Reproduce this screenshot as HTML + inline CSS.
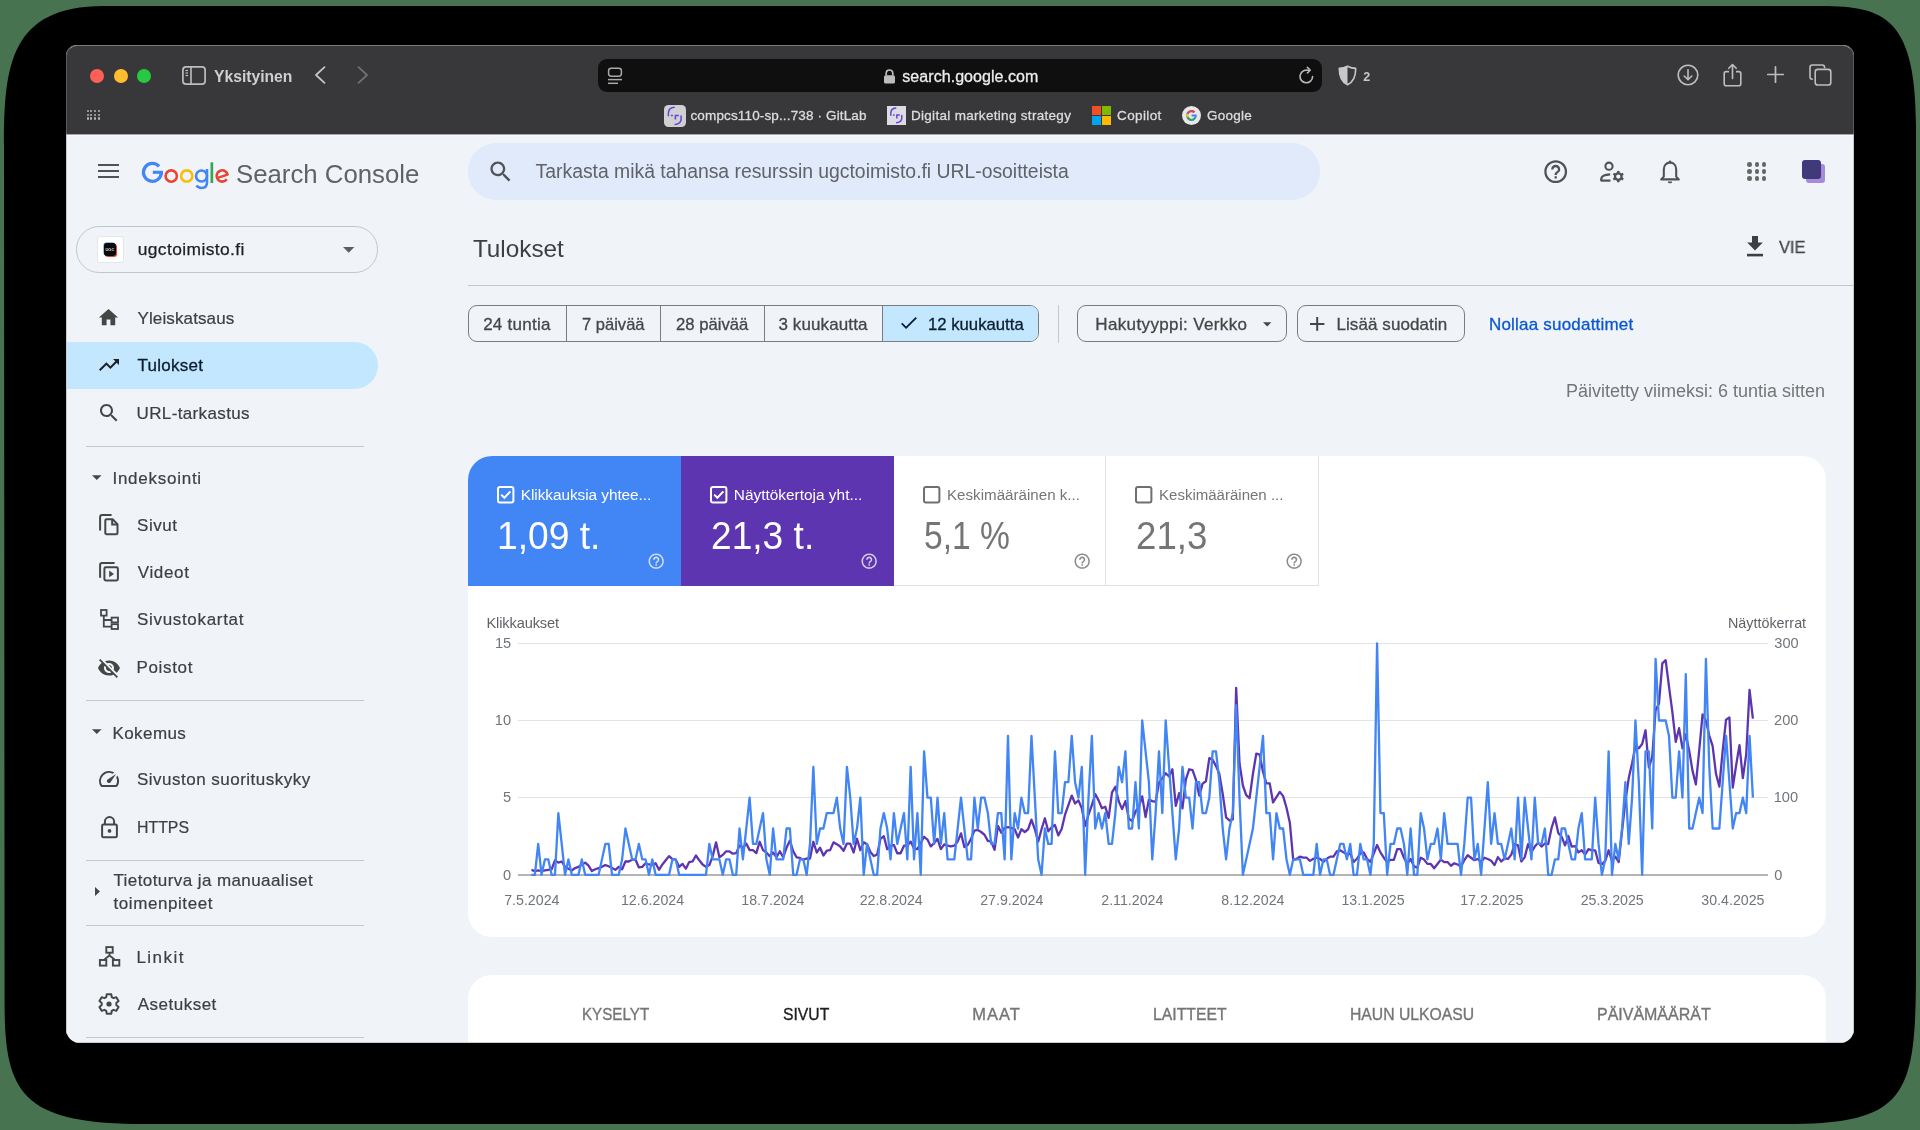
<!DOCTYPE html>
<html><head><meta charset="utf-8">
<style>
*{box-sizing:border-box;margin:0;padding:0}
html,body{width:1920px;height:1130px;overflow:hidden;background:#487350;font-family:"Liberation Sans",sans-serif}
.a{position:absolute}
.t{position:absolute;white-space:nowrap;line-height:1}
.i{position:absolute;overflow:visible}
#win{position:absolute;left:66px;top:45px;width:1788px;height:998px;border-radius:11px 11px 14px 14px;overflow:hidden;background:#f0f4f9}
#pg{position:absolute;left:-66px;top:-45px;width:1920px;height:1130px;will-change:transform}
</style></head><body>
<svg class="a" style="left:0;top:0" width="1920" height="1130"><path d="M4 146 C4 66 10 6 104 6 L1816 6 C1880 6 1916 12 1916 126 L1916 964 C1916 1094 1910 1124 1786 1124 L144.6 1124 C22.6 1124 4.6 1094 4.6 1004 Z" fill="#000"/></svg>
<div id="win"><div id="pg">
<div class="a" style="left:66px;top:45px;width:1788px;height:89px;background:#38383a"></div>
<div class="a" style="left:66px;top:134px;width:1788px;height:1px;background:#a3a5a8"></div>
<div class="a" style="left:66px;top:135px;width:1788px;height:1px;background:#f5f8fc"></div>
<div class="a" style="left:66px;top:45px;width:1788px;height:89px;border-top:1px solid #7a7a7c;border-left:1px solid #58585a;border-right:1px solid #58585a;border-radius:11px 11px 0 0"></div>
<div class="a" style="left:90px;top:68.5px;width:14px;height:14px;border-radius:50%;background:#fe5f57"></div>
<div class="a" style="left:113.5px;top:68.5px;width:14px;height:14px;border-radius:50%;background:#febc2e"></div>
<div class="a" style="left:137px;top:68.5px;width:14px;height:14px;border-radius:50%;background:#28c840"></div>
<svg class="i" style="left:182px;top:66px;width:24px;height:19px;" viewBox="0 0 24 19"><rect x="0.9" y="0.9" width="22.2" height="17.2" rx="3.2" fill="none" stroke="#bdbdbd" stroke-width="1.7"/><line x1="9" y1="1" x2="9" y2="18" stroke="#bdbdbd" stroke-width="1.6"/><line x1="3.5" y1="4.5" x2="6" y2="4.5" stroke="#bdbdbd" stroke-width="1.2"/><line x1="3.5" y1="7" x2="6" y2="7" stroke="#bdbdbd" stroke-width="1.2"/><line x1="3.5" y1="9.5" x2="6" y2="9.5" stroke="#bdbdbd" stroke-width="1.2"/></svg>
<div class="t" style="left:213.56px;top:68.86px;font-size:16px;color:#cfcfcf;transform:scaleX(0.9797);transform-origin:0 0;font-weight:bold;">Yksityinen</div>
<svg class="i" style="left:314px;top:66px;width:12px;height:18px;" viewBox="0 0 12 18"><path d="M10.5 1.2 L2 9 L10.5 16.8" fill="none" stroke="#c4c4c4" stroke-width="1.8" stroke-linecap="round" stroke-linejoin="round"/></svg>
<svg class="i" style="left:357px;top:66px;width:12px;height:18px;" viewBox="0 0 12 18"><path d="M1.5 1.2 L10 9 L1.5 16.8" fill="none" stroke="#707072" stroke-width="1.8" stroke-linecap="round" stroke-linejoin="round"/></svg>
<div class="a" style="left:598px;top:59px;width:724px;height:33px;border-radius:9px;background:#0f0f0f"></div>
<svg class="i" style="left:607px;top:67px;width:16px;height:18px;" viewBox="0 0 16 18"><rect x="1.6" y="1.2" width="12.8" height="8" rx="2.6" fill="none" stroke="#a9a9a9" stroke-width="1.5"/><line x1="1" y1="12.6" x2="15" y2="12.6" stroke="#a9a9a9" stroke-width="1.5"/><line x1="1" y1="16.3" x2="11" y2="16.3" stroke="#a9a9a9" stroke-width="1.5"/></svg>
<svg class="i" style="left:883px;top:69px;width:13px;height:15px;" viewBox="0 0 13 15"><path d="M3.2 6.5 V4.4 C3.2 2.3 4.6 1 6.5 1 C8.4 1 9.8 2.3 9.8 4.4 V6.5" fill="none" stroke="#bdbdbd" stroke-width="1.7"/><rect x="1" y="6.2" width="11" height="8.3" rx="1.6" fill="#bdbdbd"/></svg>
<div class="t" style="left:902.30px;top:68.76px;font-size:16px;color:#ececec;letter-spacing:0.053px;-webkit-text-stroke:0.3px #ececec;">search.google.com</div>
<svg class="i" style="left:1298px;top:66px;width:18px;height:19px;" viewBox="0 0 18 19"><path d="M14.6 10.6 A6.3 6.3 0 1 1 9 4.2 L11.5 4.2" fill="none" stroke="#b9b9b9" stroke-width="1.6" stroke-linecap="round"/><path d="M9.4 1.4 L12.2 4.2 L9.4 7" fill="none" stroke="#b9b9b9" stroke-width="1.6" stroke-linecap="round" stroke-linejoin="round"/></svg>
<svg class="i" style="left:1338px;top:65px;width:19px;height:21px;" viewBox="0 0 19 21"><path d="M9.5 1.2 C6.8 2.6 4 3.3 1.3 3.4 C1.2 11 3.6 16.8 9.5 19.8 C15.4 16.8 17.8 11 17.7 3.4 C15 3.3 12.2 2.6 9.5 1.2 Z" fill="none" stroke="#c8c8c8" stroke-width="1.6" stroke-linejoin="round"/><path d="M9.5 1.2 C6.8 2.6 4 3.3 1.3 3.4 C1.2 11 3.6 16.8 9.5 19.8 Z" fill="#c8c8c8"/></svg>
<div class="t" style="left:1363.36px;top:70.62px;font-size:12.5px;color:#c8c8c8;font-weight:bold;">2</div>
<svg class="i" style="left:1677px;top:64px;width:22px;height:22px;" viewBox="0 0 22 22"><circle cx="11" cy="11" r="9.8" fill="none" stroke="#bdbdbd" stroke-width="1.6"/><path d="M11 5.8 V15.6 M7.2 12 L11 15.8 L14.8 12" fill="none" stroke="#bdbdbd" stroke-width="1.6" stroke-linecap="round" stroke-linejoin="round"/></svg>
<svg class="i" style="left:1723px;top:63px;width:19px;height:24px;" viewBox="0 0 19 24"><path d="M6 8.6 H3.2 C2 8.6 1.2 9.4 1.2 10.6 V20.8 C1.2 22 2 22.8 3.2 22.8 H15.8 C17 22.8 17.8 22 17.8 20.8 V10.6 C17.8 9.4 17 8.6 15.8 8.6 H13" fill="none" stroke="#bdbdbd" stroke-width="1.6"/><path d="M9.5 15.5 V1.8 M5.8 5.3 L9.5 1.5 L13.2 5.3" fill="none" stroke="#bdbdbd" stroke-width="1.6" stroke-linecap="round" stroke-linejoin="round"/></svg>
<svg class="i" style="left:1767px;top:66px;width:17px;height:17px;" viewBox="0 0 17 17"><path d="M8.5 0.8 V16.2 M0.8 8.5 H16.2" fill="none" stroke="#bdbdbd" stroke-width="1.7" stroke-linecap="round"/></svg>
<svg class="i" style="left:1809px;top:64px;width:23px;height:22px;" viewBox="0 0 23 22"><path d="M3.8 15.2 H3.4 C2 15.2 1 14.2 1 12.8 V3.4 C1 2 2 1 3.4 1 H13.2 C14.6 1 15.6 2 15.6 3.4 V4.2" fill="none" stroke="#bdbdbd" stroke-width="1.6"/><rect x="6.2" y="5.4" width="15.6" height="15.6" rx="2.6" fill="none" stroke="#bdbdbd" stroke-width="1.6"/></svg>
<div class="a" style="left:86.5px;top:109.6px;width:2.2px;height:2.2px;background:#b5b5b5;border-radius:1px"></div>
<div class="a" style="left:86.5px;top:113.5px;width:2.2px;height:2.2px;background:#b5b5b5;border-radius:1px"></div>
<div class="a" style="left:86.5px;top:117.4px;width:2.2px;height:2.2px;background:#b5b5b5;border-radius:1px"></div>
<div class="a" style="left:90.2px;top:109.6px;width:2.2px;height:2.2px;background:#b5b5b5;border-radius:1px"></div>
<div class="a" style="left:90.2px;top:113.5px;width:2.2px;height:2.2px;background:#b5b5b5;border-radius:1px"></div>
<div class="a" style="left:90.2px;top:117.4px;width:2.2px;height:2.2px;background:#b5b5b5;border-radius:1px"></div>
<div class="a" style="left:93.9px;top:109.6px;width:2.2px;height:2.2px;background:#b5b5b5;border-radius:1px"></div>
<div class="a" style="left:93.9px;top:113.5px;width:2.2px;height:2.2px;background:#b5b5b5;border-radius:1px"></div>
<div class="a" style="left:93.9px;top:117.4px;width:2.2px;height:2.2px;background:#b5b5b5;border-radius:1px"></div>
<div class="a" style="left:97.6px;top:109.6px;width:2.2px;height:2.2px;background:#b5b5b5;border-radius:1px"></div>
<div class="a" style="left:97.6px;top:113.5px;width:2.2px;height:2.2px;background:#b5b5b5;border-radius:1px"></div>
<div class="a" style="left:97.6px;top:117.4px;width:2.2px;height:2.2px;background:#b5b5b5;border-radius:1px"></div>
<svg class="i" style="left:664px;top:105px;width:22px;height:22px;" viewBox="0 0 22 22"><rect x="0" y="0" width="22" height="22" rx="4.5" fill="#cfd0d2"/><path d="M10.1 2.3 C6.8 2.7 4.4 5 4.4 8.2 V10.8" fill="none" stroke="#6a3fd8" stroke-width="1.5" stroke-linecap="round"/><path d="M6.9 10.5 H8.9" stroke="#6a3fd8" stroke-width="1.5"/><path d="M14.8 10.5 H11.4 V14.6" fill="none" stroke="#6a3fd8" stroke-width="1.5"/><path d="M17.1 11.1 V14 C17.1 17.2 14.6 19.1 11.2 19.4" fill="none" stroke="#6a3fd8" stroke-width="1.5" stroke-linecap="round"/></svg>
<div class="t" style="left:690.46px;top:108.87px;font-size:13.5px;color:#dcdcdc;letter-spacing:0.144px;-webkit-text-stroke:0.3px #dcdcdc;">compcs110-sp...738 · GitLab</div>
<svg class="i" style="left:887px;top:106px;width:19px;height:19px;" viewBox="0 0 22 22"><rect x="0" y="0" width="22" height="22" fill="#dcdce2"/><path d="M10.1 2.3 C6.8 2.7 4.4 5 4.4 8.2 V10.8" fill="none" stroke="#6a3fd8" stroke-width="1.7" stroke-linecap="round"/><path d="M6.9 10.5 H8.9" stroke="#6a3fd8" stroke-width="1.7"/><path d="M14.8 10.5 H11.4 V14.6" fill="none" stroke="#6a3fd8" stroke-width="1.7"/><path d="M17.1 11.1 V14 C17.1 17.2 14.6 19.1 11.2 19.4" fill="none" stroke="#6a3fd8" stroke-width="1.7" stroke-linecap="round"/></svg>
<div class="t" style="left:910.92px;top:108.87px;font-size:13.5px;color:#dcdcdc;letter-spacing:0.309px;-webkit-text-stroke:0.3px #dcdcdc;">Digital marketing strategy</div>
<svg class="i" style="left:1092px;top:106px;width:19px;height:19px;" viewBox="0 0 19 19"><rect x="0" y="0" width="9" height="9" fill="#f25022"/><rect x="10" y="0" width="9" height="9" fill="#7fba00"/><rect x="0" y="10" width="9" height="9" fill="#00a4ef"/><rect x="10" y="10" width="9" height="9" fill="#ffb900"/></svg>
<div class="t" style="left:1117.03px;top:108.87px;font-size:13.5px;color:#dcdcdc;letter-spacing:0.376px;-webkit-text-stroke:0.3px #dcdcdc;">Copilot</div>
<svg class="i" style="left:1182px;top:106px;width:19px;height:19px;" viewBox="0 0 19 19"><circle cx="9.5" cy="9.5" r="9.5" fill="#e8e8e8"/><path d="M14.6 8.6 H9.6 V10.6 H12.5 C12.1 12 11 12.9 9.5 12.9 C7.6 12.9 6.1 11.4 6.1 9.5 C6.1 7.6 7.6 6.1 9.5 6.1 C10.4 6.1 11.1 6.4 11.7 6.9 L13.1 5.5 C12.2 4.6 10.9 4.1 9.5 4.1 C6.5 4.1 4.1 6.5 4.1 9.5 C4.1 12.5 6.5 14.9 9.5 14.9 C12.4 14.9 14.7 12.8 14.7 9.6 Z" fill="#4285f4"/><path d="M5 7 A5.4 5.4 0 0 1 13.1 5.5 L11.7 6.9 A3.4 3.4 0 0 0 6.6 8 Z" fill="#ea4335"/><path d="M4.5 11.5 A5.4 5.4 0 0 1 4.6 7.4 L6.5 8.3 A3.4 3.4 0 0 0 6.4 10.7 Z" fill="#fbbc05"/><path d="M4.6 11.6 L6.5 10.8 A3.4 3.4 0 0 0 11.9 12 L13.3 13.3 A5.4 5.4 0 0 1 4.6 11.6 Z" fill="#34a853"/></svg>
<div class="t" style="left:1207.03px;top:108.87px;font-size:13.5px;color:#dcdcdc;letter-spacing:0.236px;-webkit-text-stroke:0.3px #dcdcdc;">Google</div>
<div class="a" style="left:98px;top:164.3px;width:21.4px;height:2px;background:#505356"></div>
<div class="a" style="left:98px;top:170.3px;width:21.4px;height:2px;background:#505356"></div>
<div class="a" style="left:98px;top:176.3px;width:21.4px;height:2px;background:#505356"></div>
<svg class="a" style="left:0;top:0" width="300" height="220"><path d="M159.05 166.31 A8.95 8.95 0 1 0 161.35 172.30" fill="none" stroke="#4285f4" stroke-width="3.3"/><path d="M162.95 172.30 H152.80" stroke="#4285f4" stroke-width="3.1"/><circle cx="171.25" cy="176" r="5.65" fill="none" stroke="#ea4335" stroke-width="2.55"/><circle cx="186.75" cy="176" r="5.65" fill="none" stroke="#fbbc05" stroke-width="2.55"/><circle cx="201.5" cy="176" r="5.5" fill="none" stroke="#4285f4" stroke-width="2.55"/><path d="M207 169 V182.4 C207 186 204.8 187.9 201.4 187.9 C199.2 187.9 197.5 187.1 196.4 185.6" fill="none" stroke="#4285f4" stroke-width="2.55"/><rect x="210.5" y="162.3" width="2.7" height="20.7" fill="#34a853"/><path d="M226.83 179.24 A5.65 5.65 0 1 1 227.85 175.40" fill="none" stroke="#ea4335" stroke-width="2.55"/><path d="M216.8 178.2 L227.6 174.6" stroke="#ea4335" stroke-width="2.4"/></svg>
<div class="t" style="left:236.14px;top:160.59px;font-size:26px;color:#5f6368;transform:scaleX(0.9914);transform-origin:0 0;">Search Console</div>
<div class="a" style="left:467.5px;top:143.4px;width:852.5px;height:56.2px;border-radius:28px;background:#e0eafb"></div>
<svg class="i" style="left:487.4px;top:157.6px;width:27.4px;height:27.4px;" viewBox="0 0 24 24"><path fill="#505356" d="M15.5 14h-.79l-.28-.27C15.41 12.59 16 11.11 16 9.5 16 5.91 13.09 3 9.5 3S3 5.91 3 9.5 5.91 16 9.5 16c1.61 0 3.09-.59 4.23-1.57l.27.28v.79l5 4.99L20.49 19l-4.99-5zm-6 0C7.01 14 5 11.99 5 9.5S7.01 5 9.5 5 14 7.01 14 9.5 11.99 14 9.5 14z"/></svg>
<div class="t" style="left:535.61px;top:161.98px;font-size:19.4px;color:#5f6368;letter-spacing:-0.023px;">Tarkasta mikä tahansa resurssin ugctoimisto.fi URL-osoitteista</div>
<svg class="i" style="left:1542.3px;top:157.6px;width:27.4px;height:27.4px;" viewBox="0 0 24 24"><path fill="#505356" d="M11 18h2v-2h-2v2zm1-16C6.48 2 2 6.48 2 12s4.48 10 10 10 10-4.48 10-10S17.52 2 12 2zm0 18c-4.41 0-8-3.59-8-8s3.59-8 8-8 8 3.59 8 8-3.59 8-8 8zm0-14c-2.21 0-4 1.79-4 4h2c0-1.1.9-2 2-2s2 .9 2 2c0 2-3 1.75-3 5h2c0-2.25 3-2.5 3-5 0-2.21-1.79-4-4-4z"/></svg>
<svg class="i" style="left:1600px;top:160.5px;width:25px;height:22px;" viewBox="0 0 25 22"><circle cx="9" cy="5.2" r="3.6" fill="none" stroke="#505356" stroke-width="2.1"/><path d="M1.3 20.3 V17.8 C1.3 15.4 5 13.6 10.2 13.3" fill="none" stroke="#505356" stroke-width="2.3"/><line x1="1.3" y1="19.6" x2="10.5" y2="19.6" stroke="#505356" stroke-width="2.2"/><g transform="translate(18.3 15.6)"><circle r="3.3" fill="none" stroke="#505356" stroke-width="2.3"/><rect x="-1.2" y="-5.7" width="2.4" height="2.6" fill="#505356" transform="rotate(0)"/><rect x="-1.2" y="-5.7" width="2.4" height="2.6" fill="#505356" transform="rotate(60)"/><rect x="-1.2" y="-5.7" width="2.4" height="2.6" fill="#505356" transform="rotate(120)"/><rect x="-1.2" y="-5.7" width="2.4" height="2.6" fill="#505356" transform="rotate(180)"/><rect x="-1.2" y="-5.7" width="2.4" height="2.6" fill="#505356" transform="rotate(240)"/><rect x="-1.2" y="-5.7" width="2.4" height="2.6" fill="#505356" transform="rotate(300)"/></g></svg>
<svg class="i" style="left:1659.5px;top:159.5px;width:20px;height:24px;" viewBox="0 0 20 24"><path d="M10 2.6 C6.1 2.6 3.8 5.6 3.8 9.4 V16.6 L1.2 19.4 H18.8 L16.2 16.6 V9.4 C16.2 5.6 13.9 2.6 10 2.6 Z" fill="none" stroke="#505356" stroke-width="2.1" stroke-linejoin="round"/><circle cx="10" cy="1.8" r="1.3" fill="#505356"/><path d="M7.8 21.4 H12.2 C12.2 22.6 11.2 23.3 10 23.3 C8.8 23.3 7.8 22.6 7.8 21.4Z" fill="#505356"/></svg>
<div class="a" style="left:1747.4px;top:162.0px;width:4.6px;height:4.6px;border-radius:50%;background:#666"></div>
<div class="a" style="left:1747.4px;top:169.1px;width:4.6px;height:4.6px;border-radius:50%;background:#666"></div>
<div class="a" style="left:1747.4px;top:176.3px;width:4.6px;height:4.6px;border-radius:50%;background:#666"></div>
<div class="a" style="left:1754.5px;top:162.0px;width:4.6px;height:4.6px;border-radius:50%;background:#666"></div>
<div class="a" style="left:1754.5px;top:169.1px;width:4.6px;height:4.6px;border-radius:50%;background:#666"></div>
<div class="a" style="left:1754.5px;top:176.3px;width:4.6px;height:4.6px;border-radius:50%;background:#666"></div>
<div class="a" style="left:1761.6px;top:162.0px;width:4.6px;height:4.6px;border-radius:50%;background:#666"></div>
<div class="a" style="left:1761.6px;top:169.1px;width:4.6px;height:4.6px;border-radius:50%;background:#666"></div>
<div class="a" style="left:1761.6px;top:176.3px;width:4.6px;height:4.6px;border-radius:50%;background:#666"></div>
<div class="a" style="left:1806px;top:163.8px;width:19.2px;height:19px;border-radius:3px;background:#a68bdc"></div>
<div class="a" style="left:1802px;top:159.8px;width:19px;height:19.2px;border-radius:3px;background:#403a7a"></div>
<div class="a" style="left:76px;top:226.2px;width:302px;height:46.4px;border-radius:23.2px;border:1px solid #c2c4c6"></div>
<div class="a" style="left:96.6px;top:235.6px;width:27px;height:27.6px;border-radius:3px;background:#fff;border:1px solid #e6e6e6"></div>
<div class="a" style="left:104.2px;top:243px;width:11.6px;height:13px;border-radius:3px;background:#0a0a0a;box-shadow:1px 1px 0 #e8432a, -0.5px -0.5px 0 #3a7bd5"></div>
<div class="t" style="left:105.4px;top:247.6px;font-size:4px;color:#ddd;font-weight:bold">UGC</div>
<div class="t" style="left:137.67px;top:240.77px;font-size:17.4px;color:#1f1f1f;letter-spacing:0.410px;-webkit-text-stroke:0.25px #1f1f1f;">ugctoimisto.fi</div>
<svg class="i" style="left:343px;top:247px;width:11.4px;height:5.8px;" viewBox="0 0 11.4 5.8"><path d="M0 0 H11.4 L5.7 5.8 Z" fill="#5b5e61"/></svg>
<div class="t" style="left:472.91px;top:236.63px;font-size:24.3px;color:#3c4043;letter-spacing:0.004px;">Tulokset</div>
<svg class="i" style="left:1747.3px;top:236.2px;width:16px;height:20.6px;" viewBox="0 0 16 20.6"><path d="M5 0 H11 V6.6 H15.8 L8 14.6 L0.2 6.6 H5 Z" fill="#3c4043"/><rect x="0" y="17.8" width="16" height="2.6" fill="#3c4043"/></svg>
<div class="t" style="left:1778.92px;top:239.01px;font-size:17px;color:#444746;transform:scaleX(0.9697);transform-origin:0 0;-webkit-text-stroke:0.3px #444746;">VIE</div>
<div class="a" style="left:468px;top:285px;width:1386px;height:1.2px;background:#c4c7ca"></div>
<div class="a" style="left:66px;top:341.8px;width:312px;height:47px;border-radius:0 23.5px 23.5px 0;background:#c2e7ff"></div>
<svg class="i" style="left:97.3px;top:306.4px;width:23px;height:23px;" viewBox="0 0 24 24"><path fill="#444746" d="M10 20v-6h4v6h5v-8h3L12 3 2 12h3v8z"/></svg>
<div class="t" style="left:137.46px;top:310.31px;font-size:17px;color:#3c4043;letter-spacing:0.125px;-webkit-text-stroke:0.2px #3c4043;">Yleiskatsaus</div>
<svg class="i" style="left:96.6px;top:353px;width:24px;height:24px;" viewBox="0 0 24 24"><path fill="#1f1f1f" d="M16 6l2.29 2.29-4.88 4.88-4-4L2 16.59 3.41 18l6-6 4 4 6.3-6.29L22 12V6z"/></svg>
<div class="t" style="left:137.46px;top:357.01px;font-size:17px;color:#0b1d2e;letter-spacing:0.264px;-webkit-text-stroke:0.3px #0b1d2e;">Tulokset</div>
<svg class="i" style="left:96.5px;top:401px;width:24px;height:24px;" viewBox="0 0 24 24"><path fill="#444746" d="M15.5 14h-.79l-.28-.27C15.41 12.59 16 11.11 16 9.5 16 5.91 13.09 3 9.5 3S3 5.91 3 9.5 5.91 16 9.5 16c1.61 0 3.09-.59 4.23-1.57l.27.28v.79l5 4.99L20.49 19l-4.99-5zm-6 0C7.01 14 5 11.99 5 9.5S7.01 5 9.5 5 14 7.01 14 9.5 11.99 14 9.5 14z"/></svg>
<div class="t" style="left:136.53px;top:404.51px;font-size:17px;color:#3c4043;letter-spacing:0.370px;-webkit-text-stroke:0.2px #3c4043;">URL-tarkastus</div>
<div class="a" style="left:85.5px;top:445.5px;width:278.5px;height:1.2px;background:#c6c8cb"></div>
<div class="a" style="left:85.5px;top:700px;width:278.5px;height:1.2px;background:#c6c8cb"></div>
<div class="a" style="left:85.5px;top:860px;width:278.5px;height:1.2px;background:#c6c8cb"></div>
<div class="a" style="left:85.5px;top:924.5px;width:278.5px;height:1.2px;background:#c6c8cb"></div>
<div class="a" style="left:85.5px;top:1037px;width:278.5px;height:1.2px;background:#c6c8cb"></div>
<svg class="i" style="left:92.2px;top:475.3px;width:9.6px;height:5.4px;" viewBox="0 0 10 5"><path d="M0 0 H10 L5 5 Z" fill="#444746"/></svg>
<div class="t" style="left:112.47px;top:470.01px;font-size:17px;color:#3c4043;letter-spacing:0.738px;-webkit-text-stroke:0.2px #3c4043;">Indeksointi</div>
<svg class="i" style="left:92.2px;top:729.3px;width:9.6px;height:5.4px;" viewBox="0 0 10 5"><path d="M0 0 H10 L5 5 Z" fill="#444746"/></svg>
<div class="t" style="left:112.44px;top:724.91px;font-size:17px;color:#3c4043;letter-spacing:0.427px;-webkit-text-stroke:0.2px #3c4043;">Kokemus</div>
<svg class="i" style="left:95.2px;top:887.3px;width:5px;height:9px;" viewBox="0 0 5 9"><path d="M0 0 V9 L5 4.5 Z" fill="#444746"/></svg>
<div class="t" style="left:113.46px;top:871.91px;font-size:17px;color:#3c4043;letter-spacing:0.414px;-webkit-text-stroke:0.2px #3c4043;">Tietoturva ja manuaaliset</div>
<div class="t" style="left:113.55px;top:895.21px;font-size:17px;color:#3c4043;letter-spacing:0.570px;-webkit-text-stroke:0.2px #3c4043;">toimenpiteet</div>
<svg class="i" style="left:98.8px;top:514.2px;width:19.6px;height:21.4px;" viewBox="0 0 19.6 21.4"><path d="M1.1 16.5 V3.2 C1.1 2 2 1.1 3.2 1.1 H12.6" fill="none" stroke="#444746" stroke-width="2"/><path d="M6.3 6.6 C6.3 5.8 6.9 5.2 7.7 5.2 H13.6 L18.5 10.1 V18.9 C18.5 19.7 17.9 20.3 17.1 20.3 H7.7 C6.9 20.3 6.3 19.7 6.3 18.9 Z" fill="none" stroke="#444746" stroke-width="2" stroke-linejoin="round"/><path d="M13.2 5.4 V10.5 H18.3" fill="none" stroke="#444746" stroke-width="2"/></svg>
<div class="t" style="left:137.04px;top:516.91px;font-size:17px;color:#3c4043;letter-spacing:0.527px;-webkit-text-stroke:0.2px #3c4043;">Sivut</div>
<svg class="i" style="left:98.8px;top:562.3px;width:20px;height:19.6px;" viewBox="0 0 20 19.6"><path d="M1.1 15.8 V3.1 C1.1 2 2 1.1 3.1 1.1 H15.6" fill="none" stroke="#444746" stroke-width="2"/><rect x="5.4" y="5.3" width="13.5" height="13.2" rx="1.4" fill="none" stroke="#444746" stroke-width="2"/><path d="M10.2 8.5 V15.3 L15 11.9 Z" fill="#444746"/></svg>
<div class="t" style="left:137.72px;top:564.21px;font-size:17px;color:#3c4043;letter-spacing:0.663px;-webkit-text-stroke:0.2px #3c4043;">Videot</div>
<svg class="i" style="left:99.5px;top:609px;width:19px;height:21px;" viewBox="0 0 19 21"><rect x="1" y="1" width="5.6" height="5.6" fill="none" stroke="#444746" stroke-width="1.8"/><rect x="11.6" y="8.6" width="6.4" height="4.8" fill="none" stroke="#444746" stroke-width="1.8"/><rect x="11.6" y="15.2" width="6.4" height="4.8" fill="none" stroke="#444746" stroke-width="1.8"/><path d="M3.8 6.6 V17.6 H11.6 M3.8 11 H11.6" fill="none" stroke="#444746" stroke-width="1.8"/></svg>
<div class="t" style="left:137.04px;top:611.21px;font-size:17px;color:#3c4043;letter-spacing:0.674px;-webkit-text-stroke:0.2px #3c4043;">Sivustokartat</div>
<svg class="i" style="left:97px;top:655.5px;width:24px;height:24px;" viewBox="0 0 24 24"><path fill="#444746" d="M12 7c2.76 0 5 2.24 5 5 0 .65-.13 1.26-.36 1.83l2.92 2.92c1.51-1.26 2.7-2.89 3.43-4.75-1.73-4.39-6-7.5-11-7.5-1.4 0-2.74.25-3.98.7l2.16 2.16C10.74 7.13 11.35 7 12 7zM2 4.27l2.28 2.28.46.46C3.08 8.3 1.78 10.02 1 12c1.73 4.39 6 7.5 11 7.5 1.55 0 3.03-.3 4.38-.84l.42.42L19.73 22 21 20.73 3.27 3 2 4.27zM7.53 9.8l1.55 1.55c-.05.21-.08.43-.08.65 0 1.66 1.34 3 3 3 .22 0 .44-.03.65-.08l1.55 1.55c-.67.33-1.41.53-2.2.53-2.76 0-5-2.24-5-5 0-.79.2-1.53.53-2.2zm4.31-.78l3.15 3.15.02-.16c0-1.66-1.34-3-3-3l-.17.01z"/></svg>
<div class="t" style="left:136.44px;top:659.21px;font-size:17px;color:#3c4043;letter-spacing:0.668px;-webkit-text-stroke:0.2px #3c4043;">Poistot</div>
<svg class="i" style="left:97px;top:767px;width:24px;height:24px;" viewBox="0 0 24 24"><path fill="#444746" d="M20.38 8.57l-1.23 1.85a8 8 0 0 1-.22 7.58H5.07A8 8 0 0 1 15.58 6.85l1.85-1.23A10 10 0 0 0 3.35 19a2 2 0 0 0 1.72 1h13.85a2 2 0 0 0 1.74-1 10 10 0 0 0-.27-10.44zm-9.79 6.84a2 2 0 0 0 2.83 0l5.66-8.49-8.49 5.66a2 2 0 0 0 0 2.83z"/></svg>
<div class="t" style="left:137.04px;top:771.41px;font-size:17px;color:#3c4043;letter-spacing:0.486px;-webkit-text-stroke:0.2px #3c4043;">Sivuston suorituskyky</div>
<svg class="i" style="left:100.5px;top:815.5px;width:17px;height:22.4px;" viewBox="0 0 17 22.4"><path d="M3.9 8.5 V5.6 C3.9 3 6 1.1 8.5 1.1 C11 1.1 13.1 3 13.1 5.6 V8.5" fill="none" stroke="#444746" stroke-width="2"/><rect x="1.1" y="8.5" width="14.8" height="12.8" rx="1.4" fill="none" stroke="#444746" stroke-width="2"/><circle cx="8.5" cy="14.9" r="1.9" fill="#444746"/></svg>
<div class="t" style="left:136.53px;top:818.51px;font-size:17px;color:#3c4043;transform:scaleX(0.9337);transform-origin:0 0;-webkit-text-stroke:0.2px #3c4043;">HTTPS</div>
<svg class="i" style="left:97.5px;top:945px;width:22px;height:22px;" viewBox="0 0 22 22"><rect x="8.3" y="2.1" width="6.4" height="5.6" fill="none" stroke="#444746" stroke-width="1.9"/><rect x="1.9" y="15" width="6.4" height="5.6" fill="none" stroke="#444746" stroke-width="1.9"/><rect x="14.9" y="15" width="6.4" height="5.6" fill="none" stroke="#444746" stroke-width="1.9"/><path d="M11.5 7.7 V10.6 L6.6 14.2 M11.5 10.6 L16.4 14.2" fill="none" stroke="#444746" stroke-width="1.9" stroke-linejoin="round"/></svg>
<div class="t" style="left:136.44px;top:948.91px;font-size:17px;color:#3c4043;letter-spacing:1.467px;-webkit-text-stroke:0.2px #3c4043;">Linkit</div>
<svg class="i" style="left:97.7px;top:992.5px;width:22px;height:22px;" viewBox="0 0 22 22"><polygon points="8.23,4.14 8.75,1.26 13.25,1.26 13.77,4.14 15.56,5.17 18.31,4.18 20.56,8.08 18.33,9.97 18.33,12.03 20.56,13.92 18.31,17.82 15.56,16.83 13.77,17.86 13.25,20.74 8.75,20.74 8.23,17.86 6.44,16.83 3.69,17.82 1.44,13.92 3.67,12.03 3.67,9.97 1.44,8.08 3.69,4.18 6.44,5.17" fill="none" stroke="#444746" stroke-width="2" stroke-linejoin="round"/><circle cx="11" cy="11" r="2.6" fill="#444746"/></svg>
<div class="t" style="left:137.80px;top:996.01px;font-size:17px;color:#3c4043;letter-spacing:0.482px;-webkit-text-stroke:0.2px #3c4043;">Asetukset</div>
<div class="a" style="left:468px;top:305.2px;width:571px;height:37.3px;border-radius:9px;border:1px solid #7a7c7e;overflow:hidden"><div class="a" style="left:414px;top:0;width:157px;height:37px;background:#c2e7ff"></div></div>
<div class="a" style="left:566.4px;top:305.2px;width:1px;height:37.3px;background:#7a7c7e"></div>
<div class="a" style="left:660.2px;top:305.2px;width:1px;height:37.3px;background:#7a7c7e"></div>
<div class="a" style="left:763.6px;top:305.2px;width:1px;height:37.3px;background:#7a7c7e"></div>
<div class="a" style="left:882.4px;top:305.2px;width:1px;height:37.3px;background:#7a7c7e"></div>
<div class="t" style="left:483.15px;top:315.91px;font-size:17px;color:#444746;letter-spacing:0.257px;-webkit-text-stroke:0.3px #444746;">24 tuntia</div>
<div class="t" style="left:581.87px;top:315.91px;font-size:17px;color:#444746;transform:scaleX(0.9730);transform-origin:0 0;-webkit-text-stroke:0.3px #444746;">7 päivää</div>
<div class="t" style="left:675.67px;top:315.91px;font-size:17px;color:#444746;transform:scaleX(0.9815);transform-origin:0 0;-webkit-text-stroke:0.3px #444746;">28 päivää</div>
<div class="t" style="left:778.40px;top:315.91px;font-size:17px;color:#444746;letter-spacing:0.120px;-webkit-text-stroke:0.3px #444746;">3 kuukautta</div>
<svg class="i" style="left:897.6px;top:311.8px;width:21.6px;height:21.6px;" viewBox="0 0 24 24"><path fill="#0b1d2e" d="M9 16.17L4.83 12l-1.42 1.41L9 19 21 7l-1.41-1.41z"/></svg>
<div class="t" style="left:927.65px;top:315.91px;font-size:17px;color:#0b1d2e;transform:scaleX(0.9828);transform-origin:0 0;-webkit-text-stroke:0.3px #0b1d2e;">12 kuukautta</div>
<div class="a" style="left:1058px;top:305px;width:1px;height:37.7px;background:#c6c8cb"></div>
<div class="a" style="left:1077px;top:305.2px;width:210px;height:37.2px;border-radius:9px;border:1px solid #7a7c7e"></div>
<div class="t" style="left:1095.24px;top:316.21px;font-size:17px;color:#444746;letter-spacing:0.372px;-webkit-text-stroke:0.3px #444746;">Hakutyyppi: Verkko</div>
<svg class="i" style="left:1263px;top:321.8px;width:8.4px;height:4.8px;" viewBox="0 0 10 5"><path d="M0 0 H10 L5 5 Z" fill="#444746"/></svg>
<div class="a" style="left:1297.4px;top:305.2px;width:168px;height:37.2px;border-radius:9px;border:1px solid #7a7c7e"></div>
<svg class="i" style="left:1309.7px;top:317.2px;width:14.4px;height:13.8px;" viewBox="0 0 14.4 13.8"><path d="M7.2 0 V13.8 M0 6.9 H14.4" stroke="#444746" stroke-width="2"/></svg>
<div class="t" style="left:1336.44px;top:316.21px;font-size:17px;color:#444746;letter-spacing:0.087px;-webkit-text-stroke:0.3px #444746;">Lisää suodatin</div>
<div class="t" style="left:1488.94px;top:316.21px;font-size:17px;color:#0b57d0;letter-spacing:0.205px;-webkit-text-stroke:0.3px #0b57d0;">Nollaa suodattimet</div>
<div class="t" style="left:1565.96px;top:381.66px;font-size:18px;color:#757575;letter-spacing:0.000px;">Päivitetty viimeksi: 6 tuntia sitten</div>
<div class="a" style="left:468px;top:456px;width:1357.6px;height:481px;border-radius:24px;background:#fff;overflow:hidden"><div class="a" style="left:0;top:0;width:213.2px;height:129.8px;background:#4285f4"></div><div class="a" style="left:213.2px;top:0;width:213px;height:129.8px;background:#5e35b1"></div><div class="a" style="left:637.2px;top:0;width:1px;height:129.8px;background:#dfe1e5"></div><div class="a" style="left:850px;top:0;width:1px;height:129.8px;background:#dfe1e5"></div><div class="a" style="left:426px;top:129.2px;width:425px;height:1px;background:#dfe1e5"></div></div>
<svg class="i" style="left:496.6px;top:485.6px;width:17.4px;height:17.4px;" viewBox="0 0 17.4 17.4"><rect x="1" y="1" width="15.4" height="15.4" rx="2" fill="none" stroke="#fff" stroke-width="2"/><path d="M4.2 8.6 L7.4 11.8 L13.4 5.4" fill="none" stroke="#fff" stroke-width="2"/></svg>
<div class="t" style="left:520.77px;top:486.56px;font-size:15.4px;color:#fff;letter-spacing:-0.063px;">Klikkauksia yhtee...</div>
<div class="t" style="left:496.61px;top:516.26px;font-size:39.5px;color:#fff;transform:scaleX(0.9410);transform-origin:0 0;">1,09 t.</div>
<svg class="i" style="left:646.8px;top:552.3px;width:18.4px;height:18.4px;" viewBox="0 0 24 24"><path fill="rgba(255,255,255,0.75)" d="M11 18h2v-2h-2v2zm1-16C6.48 2 2 6.48 2 12s4.48 10 10 10 10-4.48 10-10S17.52 2 12 2zm0 18c-4.41 0-8-3.59-8-8s3.59-8 8-8 8 3.59 8 8-3.59 8-8 8zm0-14c-2.21 0-4 1.79-4 4h2c0-1.1.9-2 2-2s2 .9 2 2c0 2-3 1.75-3 5h2c0-2.25 3-2.5 3-5 0-2.21-1.79-4-4-4z"/></svg>
<svg class="i" style="left:709.6px;top:485.6px;width:17.4px;height:17.4px;" viewBox="0 0 17.4 17.4"><rect x="1" y="1" width="15.4" height="15.4" rx="2" fill="none" stroke="#fff" stroke-width="2"/><path d="M4.2 8.6 L7.4 11.8 L13.4 5.4" fill="none" stroke="#fff" stroke-width="2"/></svg>
<div class="t" style="left:733.77px;top:486.56px;font-size:15.4px;color:#fff;letter-spacing:0.010px;">Näyttökertoja yht...</div>
<div class="t" style="left:710.54px;top:516.26px;font-size:39.5px;color:#fff;transform:scaleX(0.9398);transform-origin:0 0;">21,3 t.</div>
<svg class="i" style="left:859.8px;top:552.3px;width:18.4px;height:18.4px;" viewBox="0 0 24 24"><path fill="rgba(255,255,255,0.75)" d="M11 18h2v-2h-2v2zm1-16C6.48 2 2 6.48 2 12s4.48 10 10 10 10-4.48 10-10S17.52 2 12 2zm0 18c-4.41 0-8-3.59-8-8s3.59-8 8-8 8 3.59 8 8-3.59 8-8 8zm0-14c-2.21 0-4 1.79-4 4h2c0-1.1.9-2 2-2s2 .9 2 2c0 2-3 1.75-3 5h2c0-2.25 3-2.5 3-5 0-2.21-1.79-4-4-4z"/></svg>
<svg class="i" style="left:922.6px;top:485.6px;width:17.4px;height:17.4px;" viewBox="0 0 17.4 17.4"><rect x="1" y="1" width="15.4" height="15.4" rx="2" fill="none" stroke="#6f6f6f" stroke-width="2"/></svg>
<div class="t" style="left:946.79px;top:486.56px;font-size:15.4px;color:#757575;transform:scaleX(0.9836);transform-origin:0 0;">Keskimääräinen k...</div>
<div class="t" style="left:924.06px;top:516.26px;font-size:39.5px;color:#757575;transform:scaleX(0.8507);transform-origin:0 0;">5,1 %</div>
<svg class="i" style="left:1072.8px;top:552.3px;width:18.4px;height:18.4px;" viewBox="0 0 24 24"><path fill="#8a8a8a" d="M11 18h2v-2h-2v2zm1-16C6.48 2 2 6.48 2 12s4.48 10 10 10 10-4.48 10-10S17.52 2 12 2zm0 18c-4.41 0-8-3.59-8-8s3.59-8 8-8 8 3.59 8 8-3.59 8-8 8zm0-14c-2.21 0-4 1.79-4 4h2c0-1.1.9-2 2-2s2 .9 2 2c0 2-3 1.75-3 5h2c0-2.25 3-2.5 3-5 0-2.21-1.79-4-4-4z"/></svg>
<svg class="i" style="left:1135.1px;top:485.6px;width:17.4px;height:17.4px;" viewBox="0 0 17.4 17.4"><rect x="1" y="1" width="15.4" height="15.4" rx="2" fill="none" stroke="#6f6f6f" stroke-width="2"/></svg>
<div class="t" style="left:1159.30px;top:486.56px;font-size:15.4px;color:#757575;transform:scaleX(0.9762);transform-origin:0 0;">Keskimääräinen ...</div>
<div class="t" style="left:1136.07px;top:516.26px;font-size:39.5px;color:#757575;transform:scaleX(0.9280);transform-origin:0 0;">21,3</div>
<svg class="i" style="left:1285.3px;top:552.3px;width:18.4px;height:18.4px;" viewBox="0 0 24 24"><path fill="#8a8a8a" d="M11 18h2v-2h-2v2zm1-16C6.48 2 2 6.48 2 12s4.48 10 10 10 10-4.48 10-10S17.52 2 12 2zm0 18c-4.41 0-8-3.59-8-8s3.59-8 8-8 8 3.59 8 8-3.59 8-8 8zm0-14c-2.21 0-4 1.79-4 4h2c0-1.1.9-2 2-2s2 .9 2 2c0 2-3 1.75-3 5h2c0-2.25 3-2.5 3-5 0-2.21-1.79-4-4-4z"/></svg>
<div class="t" style="left:486.43px;top:616.24px;font-size:14.6px;color:#5f6368;letter-spacing:-0.116px;">Klikkaukset</div>
<div class="t" style="left:1727.95px;top:616.24px;font-size:14.6px;color:#5f6368;transform:scaleX(0.9827);transform-origin:0 0;">Näyttökerrat</div>
<div class="t" style="left:494.88px;top:636.24px;font-size:14.6px;color:#70757a;">15</div>
<div class="t" style="left:1774.29px;top:636.24px;font-size:14.6px;color:#70757a;">300</div>
<div class="t" style="left:494.80px;top:713.24px;font-size:14.6px;color:#70757a;">10</div>
<div class="t" style="left:1774.07px;top:713.24px;font-size:14.6px;color:#70757a;">200</div>
<div class="t" style="left:502.98px;top:790.24px;font-size:14.6px;color:#70757a;">5</div>
<div class="t" style="left:1773.70px;top:790.24px;font-size:14.6px;color:#70757a;">100</div>
<div class="t" style="left:502.91px;top:867.74px;font-size:14.6px;color:#70757a;">0</div>
<div class="t" style="left:1774.22px;top:867.74px;font-size:14.6px;color:#70757a;">0</div>
<div class="a" style="left:518px;top:642.7px;width:1249.5px;height:1.2px;background:#e3e3e3"></div>
<div class="a" style="left:518px;top:719.7px;width:1249.5px;height:1.2px;background:#e3e3e3"></div>
<div class="a" style="left:518px;top:796.7px;width:1249.5px;height:1.2px;background:#e3e3e3"></div>
<div class="a" style="left:518px;top:873.8px;width:1249.5px;height:2px;background:#b4b4b4"></div>
<div class="t" style="left:504.20px;top:892.98px;font-size:14.2px;color:#70757a;">7.5.2024</div>
<div class="t" style="left:620.95px;top:892.98px;font-size:14.2px;color:#70757a;">12.6.2024</div>
<div class="t" style="left:741.35px;top:892.98px;font-size:14.2px;color:#70757a;">18.7.2024</div>
<div class="t" style="left:859.63px;top:892.98px;font-size:14.2px;color:#70757a;">22.8.2024</div>
<div class="t" style="left:980.23px;top:892.98px;font-size:14.2px;color:#70757a;">27.9.2024</div>
<div class="t" style="left:1101.26px;top:892.98px;font-size:14.2px;color:#70757a;">2.11.2024</div>
<div class="t" style="left:1221.30px;top:892.98px;font-size:14.2px;color:#70757a;">8.12.2024</div>
<div class="t" style="left:1341.46px;top:892.98px;font-size:14.2px;color:#70757a;">13.1.2025</div>
<div class="t" style="left:1460.16px;top:892.98px;font-size:14.2px;color:#70757a;">17.2.2025</div>
<div class="t" style="left:1580.63px;top:892.98px;font-size:14.2px;color:#70757a;">25.3.2025</div>
<div class="t" style="left:1701.34px;top:892.98px;font-size:14.2px;color:#70757a;">30.4.2025</div>
<svg class="a" style="left:0;top:0" width="1920" height="1130"><polyline points="531.50,869.85 534.86,871.05 538.21,870.45 541.57,871.05 544.92,870.45 548.28,869.85 551.63,869.25 554.99,860.29 558.34,862.68 561.70,861.49 565.05,866.86 568.41,868.66 571.77,870.45 575.12,868.06 578.48,866.86 581.83,864.47 585.19,862.68 588.54,865.67 591.90,871.05 595.25,869.25 598.61,868.06 601.97,866.86 605.32,865.07 608.68,866.27 612.03,868.06 615.39,869.85 618.74,866.86 622.10,869.25 625.45,861.49 628.81,861.49 632.16,859.70 635.52,859.70 638.88,867.46 642.23,866.86 645.59,863.28 648.94,864.47 652.30,865.07 655.65,863.28 659.01,869.85 662.36,864.47 665.72,860.29 669.08,856.11 672.43,859.10 675.79,859.70 679.14,866.86 682.50,863.88 685.85,868.66 689.21,862.08 692.56,861.49 695.92,855.51 699.27,860.29 702.63,864.47 705.99,866.86 709.34,865.07 712.70,856.11 716.05,842.37 719.41,857.31 722.76,854.92 726.12,851.33 729.47,851.33 732.83,853.72 736.19,853.12 739.54,845.36 742.90,847.75 746.25,843.57 749.61,850.14 752.96,850.14 756.32,853.12 759.67,841.77 763.03,850.14 766.38,852.53 769.74,856.11 773.10,852.53 776.45,857.31 779.81,851.33 783.16,857.31 786.52,847.75 789.87,840.58 793.23,851.33 796.58,857.31 799.94,857.90 803.30,859.70 806.65,858.50 810.01,858.50 813.36,841.77 816.72,852.53 820.07,847.75 823.43,855.51 826.78,850.73 830.14,850.14 833.50,842.37 836.85,844.16 840.21,846.55 843.56,850.73 846.92,843.57 850.27,843.57 853.63,852.53 856.98,838.79 860.34,850.14 863.69,842.37 867.05,844.16 870.41,851.93 873.76,856.00 877.12,854.63 880.47,838.85 883.83,836.11 887.18,849.14 890.54,845.71 893.89,845.03 897.25,853.26 900.61,853.26 903.96,845.71 907.32,845.71 910.67,841.60 914.03,848.46 917.38,849.14 920.74,842.97 924.09,836.80 927.45,839.54 930.80,846.40 934.16,842.97 937.52,838.85 940.87,849.14 944.23,844.34 947.58,845.71 950.94,846.40 954.29,845.71 957.65,841.60 961.00,833.37 964.36,847.09 967.72,845.03 971.07,838.85 974.43,830.62 977.78,829.94 981.14,832.00 984.49,834.74 987.85,840.91 991.20,841.60 994.56,849.83 997.91,825.82 1001.27,832.68 1004.63,827.88 1007.98,827.19 1011.34,827.88 1014.69,829.25 1018.05,837.48 1021.40,829.25 1024.76,832.00 1028.11,829.25 1031.47,819.65 1034.83,829.25 1038.18,841.60 1041.54,829.25 1044.89,818.28 1048.25,831.31 1051.60,827.19 1054.96,825.04 1058.31,835.39 1061.67,829.02 1065.02,814.69 1068.38,805.13 1071.74,795.57 1075.09,803.54 1078.45,800.35 1081.80,808.31 1085.16,825.84 1088.51,814.69 1091.87,805.13 1095.22,793.98 1098.58,800.35 1101.93,808.31 1105.29,806.72 1108.65,817.87 1112.00,792.39 1115.36,786.81 1118.71,801.15 1122.07,809.11 1125.42,801.15 1128.78,818.67 1132.13,821.06 1135.49,811.50 1138.85,806.72 1142.20,796.37 1145.56,817.08 1148.91,799.55 1152.27,801.15 1155.62,801.94 1158.98,782.83 1162.33,778.05 1165.69,773.27 1169.05,776.46 1172.40,769.29 1175.76,805.93 1179.11,793.18 1182.47,808.31 1185.82,779.64 1189.18,769.29 1192.53,770.09 1195.89,779.64 1199.24,795.57 1202.60,783.63 1205.96,781.24 1209.31,758.14 1212.67,759.73 1216.02,766.10 1219.38,774.07 1222.73,793.98 1226.09,817.36 1229.44,820.54 1232.80,819.48 1236.16,687.79 1239.51,763.19 1242.87,785.50 1246.22,795.06 1249.58,798.24 1252.93,773.81 1256.29,753.64 1259.64,754.70 1263.00,771.69 1266.35,783.37 1269.71,783.37 1273.07,802.49 1276.42,797.18 1279.78,791.87 1283.13,796.12 1286.49,807.80 1289.84,822.67 1293.20,859.84 1296.55,858.78 1299.91,856.65 1303.26,857.71 1306.62,857.71 1309.98,860.90 1313.33,858.78 1316.69,857.71 1320.04,858.78 1323.40,861.96 1326.75,858.78 1330.11,856.65 1333.46,856.65 1336.82,851.34 1340.18,850.28 1343.53,852.40 1346.89,854.53 1350.24,853.47 1353.60,861.96 1356.95,858.78 1360.31,853.47 1363.66,852.40 1367.02,858.78 1370.38,861.96 1373.73,853.47 1377.09,844.97 1380.44,852.40 1383.80,857.71 1387.15,861.96 1390.51,859.84 1393.86,859.84 1397.22,849.22 1400.57,849.05 1403.93,857.72 1407.29,863.92 1410.64,858.96 1414.00,866.39 1417.35,867.63 1420.71,857.72 1424.06,859.58 1427.42,863.92 1430.77,863.92 1434.13,868.25 1437.49,863.92 1440.84,859.58 1444.20,862.06 1447.55,862.06 1450.91,865.77 1454.26,863.30 1457.62,864.54 1460.97,866.39 1464.33,860.20 1467.68,855.24 1471.04,857.72 1474.40,860.20 1477.75,858.96 1481.11,862.06 1484.46,857.72 1487.82,858.96 1491.17,860.82 1494.53,865.15 1497.88,857.10 1501.24,861.44 1504.60,858.34 1507.95,858.96 1511.31,854.62 1514.66,844.09 1518.02,845.33 1521.37,861.44 1524.73,857.10 1528.08,844.09 1531.44,852.14 1534.79,846.57 1538.15,842.85 1541.51,846.57 1544.86,843.47 1548.22,844.09 1551.57,827.98 1554.93,817.45 1558.28,832.94 1561.64,836.65 1564.99,845.33 1568.35,836.03 1571.71,846.57 1575.06,846.03 1578.42,852.40 1581.77,850.28 1585.13,854.53 1588.48,849.22 1591.84,850.28 1595.19,850.28 1598.55,863.02 1601.90,864.09 1605.26,860.90 1608.62,850.28 1611.97,860.90 1615.33,856.65 1618.68,861.96 1622.04,831.16 1625.39,801.43 1628.75,778.06 1632.10,763.19 1635.46,746.20 1638.82,748.33 1642.17,744.08 1645.53,730.27 1648.88,767.44 1652.24,756.82 1655.59,710.09 1658.95,703.72 1662.30,663.36 1665.66,660.18 1669.01,686.73 1672.37,712.22 1675.73,741.95 1679.08,728.15 1682.44,748.33 1685.79,734.52 1689.15,750.45 1692.50,770.63 1695.86,784.44 1699.21,750.45 1702.57,714.34 1705.92,720.71 1709.28,735.58 1712.64,746.20 1715.99,773.81 1719.35,786.56 1722.70,750.45 1726.06,719.65 1729.41,717.53 1732.77,787.62 1736.12,765.32 1739.48,745.14 1742.84,778.06 1746.19,754.70 1749.55,689.92 1752.90,718.59" fill="none" stroke="#5e35b1" stroke-width="2.3" stroke-linejoin="round"/><polyline points="531.50,874.80 534.86,874.80 538.21,843.94 541.57,874.80 544.92,859.37 548.28,859.37 551.63,874.80 554.99,874.80 558.34,813.08 561.70,843.94 565.05,874.80 568.41,859.37 571.77,874.80 575.12,874.80 578.48,874.80 581.83,859.37 585.19,874.80 588.54,874.80 591.90,874.80 595.25,874.80 598.61,874.80 601.97,859.37 605.32,843.94 608.68,843.94 612.03,874.80 615.39,874.80 618.74,874.80 622.10,859.37 625.45,828.51 628.81,843.94 632.16,859.37 635.52,859.37 638.88,843.94 642.23,859.37 645.59,859.37 648.94,874.80 652.30,859.37 655.65,874.80 659.01,874.80 662.36,874.80 665.72,874.80 669.08,874.80 672.43,859.37 675.79,859.37 679.14,874.80 682.50,874.80 685.85,874.80 689.21,874.80 692.56,874.80 695.92,874.80 699.27,874.80 702.63,874.80 705.99,874.80 709.34,843.94 712.70,859.37 716.05,859.37 719.41,859.37 722.76,874.80 726.12,859.37 729.47,859.37 732.83,874.80 736.19,874.80 739.54,828.51 742.90,859.37 746.25,828.51 749.61,797.65 752.96,843.94 756.32,843.94 759.67,828.51 763.03,813.08 766.38,859.37 769.74,874.80 773.10,828.51 776.45,859.37 779.81,859.37 783.16,859.37 786.52,828.51 789.87,828.51 793.23,874.80 796.58,874.80 799.94,859.37 803.30,859.37 806.65,874.80 810.01,843.94 813.36,766.79 816.72,843.94 820.07,828.51 823.43,828.51 826.78,813.08 830.14,813.08 833.50,813.08 836.85,797.65 840.21,828.51 843.56,843.94 846.92,766.79 850.27,797.65 853.63,843.94 856.98,828.51 860.34,797.65 863.69,874.80 867.05,843.94 870.41,859.37 873.76,874.80 877.12,874.80 880.47,828.51 883.83,813.08 887.18,828.51 890.54,859.37 893.89,813.08 897.25,843.94 900.61,828.51 903.96,813.08 907.32,859.37 910.67,766.79 914.03,859.37 917.38,813.08 920.74,874.80 924.09,751.36 927.45,797.65 930.80,797.65 934.16,843.94 937.52,797.65 940.87,843.94 944.23,813.08 947.58,859.37 950.94,859.37 954.29,859.37 957.65,828.51 961.00,797.65 964.36,828.51 967.72,859.37 971.07,859.37 974.43,797.65 977.78,828.51 981.14,797.65 984.49,797.65 987.85,813.08 991.20,843.94 994.56,843.94 997.91,813.08 1001.27,813.08 1004.63,859.37 1007.98,735.93 1011.34,859.37 1014.69,813.08 1018.05,828.51 1021.40,797.65 1024.76,813.08 1028.11,813.08 1031.47,735.93 1034.83,797.65 1038.18,859.37 1041.54,874.80 1044.89,828.51 1048.25,843.94 1051.60,843.94 1054.96,751.36 1058.31,813.08 1061.67,813.08 1065.02,782.22 1068.38,782.22 1071.74,735.93 1075.09,782.22 1078.45,797.65 1081.80,766.79 1085.16,874.80 1088.51,797.65 1091.87,735.93 1095.22,828.51 1098.58,813.08 1101.93,828.51 1105.29,813.08 1108.65,843.94 1112.00,843.94 1115.36,813.08 1118.71,766.79 1122.07,782.22 1125.42,751.36 1128.78,828.51 1132.13,828.51 1135.49,782.22 1138.85,828.51 1142.20,720.50 1145.56,751.36 1148.91,782.22 1152.27,859.37 1155.62,813.08 1158.98,751.36 1162.33,813.08 1165.69,720.50 1169.05,766.79 1172.40,813.08 1175.76,859.37 1179.11,828.51 1182.47,766.79 1185.82,797.65 1189.18,797.65 1192.53,828.51 1195.89,782.22 1199.24,782.22 1202.60,813.08 1205.96,813.08 1209.31,797.65 1212.67,751.36 1216.02,751.36 1219.38,782.22 1222.73,828.51 1226.09,859.37 1229.44,828.51 1232.80,813.08 1236.16,705.07 1239.51,797.65 1242.87,874.80 1246.22,859.37 1249.58,843.94 1252.93,828.51 1256.29,797.65 1259.64,766.79 1263.00,735.93 1266.35,813.08 1269.71,813.08 1273.07,859.37 1276.42,813.08 1279.78,828.51 1283.13,828.51 1286.49,859.37 1289.84,874.80 1293.20,859.37 1296.55,859.37 1299.91,859.37 1303.26,874.80 1306.62,874.80 1309.98,874.80 1313.33,874.80 1316.69,843.94 1320.04,874.80 1323.40,859.37 1326.75,859.37 1330.11,874.80 1333.46,874.80 1336.82,859.37 1340.18,843.94 1343.53,843.94 1346.89,859.37 1350.24,843.94 1353.60,874.80 1356.95,874.80 1360.31,843.94 1363.66,859.37 1367.02,859.37 1370.38,874.80 1373.73,843.94 1377.09,643.35 1380.44,813.08 1383.80,813.08 1387.15,874.80 1390.51,843.94 1393.86,843.94 1397.22,828.51 1400.57,828.51 1403.93,843.94 1407.29,874.80 1410.64,828.51 1414.00,874.80 1417.35,874.80 1420.71,813.08 1424.06,828.51 1427.42,859.37 1430.77,843.94 1434.13,843.94 1437.49,828.51 1440.84,859.37 1444.20,813.08 1447.55,843.94 1450.91,843.94 1454.26,843.94 1457.62,843.94 1460.97,874.80 1464.33,843.94 1467.68,797.65 1471.04,797.65 1474.40,859.37 1477.75,843.94 1481.11,874.80 1484.46,828.51 1487.82,782.22 1491.17,843.94 1494.53,813.08 1497.88,843.94 1501.24,843.94 1504.60,859.37 1507.95,843.94 1511.31,828.51 1514.66,859.37 1518.02,797.65 1521.37,859.37 1524.73,797.65 1528.08,828.51 1531.44,859.37 1534.79,797.65 1538.15,843.94 1541.51,843.94 1544.86,828.51 1548.22,874.80 1551.57,874.80 1554.93,859.37 1558.28,859.37 1561.64,828.51 1564.99,828.51 1568.35,843.94 1571.71,859.37 1575.06,859.37 1578.42,828.51 1581.77,813.08 1585.13,859.37 1588.48,859.37 1591.84,859.37 1595.19,797.65 1598.55,843.94 1601.90,874.80 1605.26,859.37 1608.62,751.36 1611.97,874.80 1615.33,843.94 1618.68,859.37 1622.04,828.51 1625.39,782.22 1628.75,843.94 1632.10,797.65 1635.46,720.50 1638.82,782.22 1642.17,874.80 1645.53,751.36 1648.88,751.36 1652.24,828.51 1655.59,658.78 1658.95,720.50 1662.30,720.50 1665.66,720.50 1669.01,735.93 1672.37,797.65 1675.73,797.65 1679.08,751.36 1682.44,797.65 1685.79,674.21 1689.15,828.51 1692.50,828.51 1695.86,813.08 1699.21,797.65 1702.57,813.08 1705.92,658.78 1709.28,766.79 1712.64,828.51 1715.99,828.51 1719.35,828.51 1722.70,782.22 1726.06,735.93 1729.41,782.22 1732.77,828.51 1736.12,813.08 1739.48,813.08 1742.84,797.65 1746.19,813.08 1749.55,735.93 1752.90,797.65" fill="none" stroke="#4285f4" stroke-width="2.3" stroke-linejoin="round"/></svg>
<div class="a" style="left:468px;top:975px;width:1357.6px;height:200px;border-radius:24px;background:#fff"></div>
<div class="t" style="left:581.69px;top:1006.03px;font-size:16.5px;color:#757575;transform:scaleX(0.9193);transform-origin:0 0;-webkit-text-stroke:0.35px #757575;">KYSELYT</div>
<div class="t" style="left:782.79px;top:1006.03px;font-size:16.5px;color:#1f1f1f;transform:scaleX(0.9512);transform-origin:0 0;-webkit-text-stroke:0.35px #1f1f1f;">SIVUT</div>
<div class="t" style="left:972.18px;top:1006.03px;font-size:16.5px;color:#757575;letter-spacing:1.006px;-webkit-text-stroke:0.35px #757575;">MAAT</div>
<div class="t" style="left:1152.74px;top:1006.03px;font-size:16.5px;color:#757575;transform:scaleX(0.9559);transform-origin:0 0;-webkit-text-stroke:0.35px #757575;">LAITTEET</div>
<div class="t" style="left:1350.44px;top:1006.03px;font-size:16.5px;color:#757575;transform:scaleX(0.9543);transform-origin:0 0;-webkit-text-stroke:0.35px #757575;">HAUN ULKOASU</div>
<div class="t" style="left:1596.72px;top:1006.03px;font-size:16.5px;color:#757575;transform:scaleX(0.9683);transform-origin:0 0;-webkit-text-stroke:0.35px #757575;">PÄIVÄMÄÄRÄT</div>
<div class="a" style="left:66px;top:135px;width:1px;height:908px;background:#c9cbce"></div>
<div class="a" style="left:1853px;top:135px;width:1px;height:908px;background:#c9cbce"></div>
<div class="a" style="left:66px;top:1042px;width:1788px;height:1px;background:#c9cbce"></div>
</div></div>
</body></html>
